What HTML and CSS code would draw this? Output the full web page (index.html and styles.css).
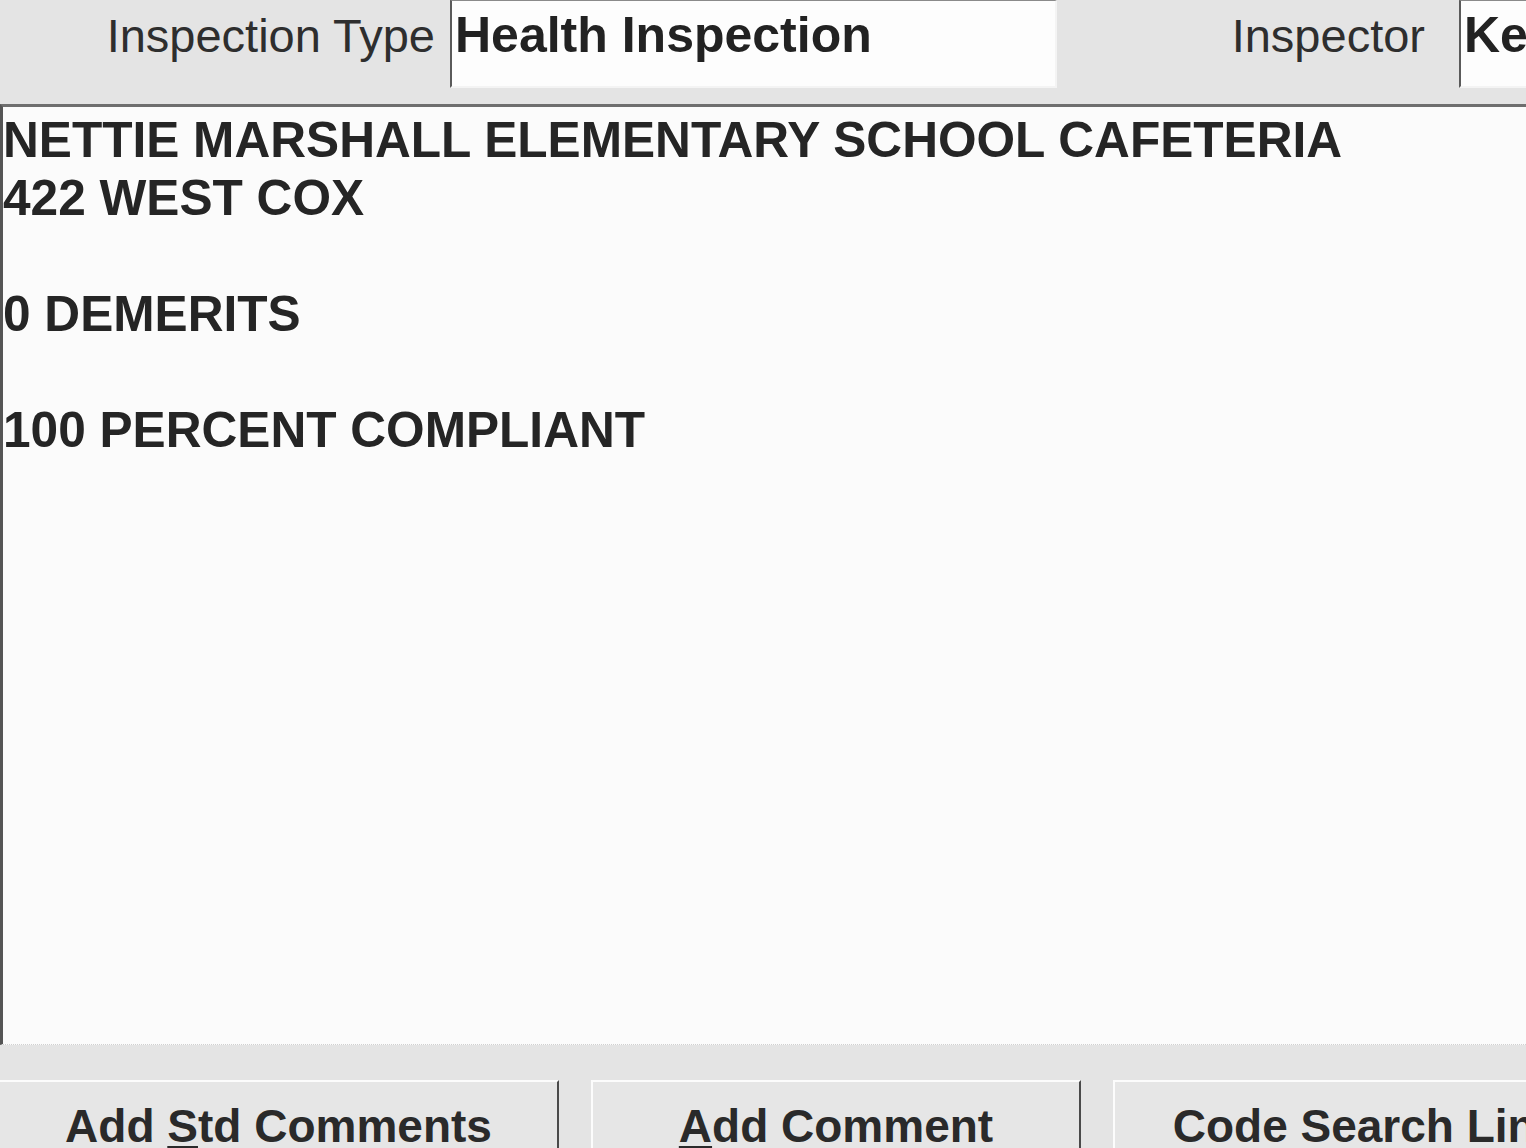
FILE: index.html
```html
<!DOCTYPE html>
<html>
<head>
<meta charset="utf-8">
<link rel="stylesheet" href="styles.css">
</head>
<body>
<div class="screen">
  <div class="topbar">
    <div class="label label-type">Inspection Type</div>
    <div class="field field-type">Health Inspection</div>
    <div class="label label-inspector">Inspector</div>
    <div class="field field-inspector">Ke</div>
  </div>
  <div class="comments">
    <div class="line">NETTIE MARSHALL ELEMENTARY SCHOOL CAFETERIA</div>
    <div class="line">422 WEST COX</div>
    <div class="line blank"></div>
    <div class="line">0 DEMERITS</div>
    <div class="line blank"></div>
    <div class="line">100 PERCENT COMPLIANT</div>
  </div>
  <div class="buttonbar">
    <div class="btn btn-first">Add <u>S</u>td Comments</div>
    <div class="btn"><u>A</u>dd Comment</div>
    <div class="btn btn-last">Code Search Link</div>
  </div>
</div>
</body>
</html>
```

FILE: styles.css
```css
html, body {
  margin: 0;
  padding: 0;
  background: #e4e4e4;
  overflow: hidden;
}
.screen {
  width: 1526px;
  height: 1148px;
  overflow: hidden;
  display: flex;
  flex-direction: column;
  font-family: "Liberation Sans", Arial, sans-serif;
  color: #262626;
  background: #e4e4e4;
}
.topbar {
  height: 104px;
  flex: none;
  display: flex;
  align-items: flex-start;
  overflow: hidden;
}
.label {
  flex: none;
  font-size: 47px;
  line-height: 60px;
  padding-top: 6px;
  text-align: right;
  box-sizing: border-box;
  color: #2e2e2e;
  white-space: nowrap;
}
.label-type {
  width: 450px;
  padding-right: 15px;
}
.label-inspector {
  width: 402px;
  padding-right: 34px;
}
.field {
  flex: none;
  height: 88px;
  box-sizing: border-box;
  background: #fdfdfd;
  border-top: 1px solid #8a8a8a;
  border-left: 2px solid #5a5a5a;
  border-bottom: 2px solid #f4f4f4;
  border-right: 2px solid #f4f4f4;
  font-size: 50px;
  font-weight: bold;
  line-height: 60px;
  padding-top: 4px;
  padding-left: 3px;
  white-space: nowrap;
  overflow: hidden;
  color: #222;
}
.field-type {
  width: 607px;
}
.field-inspector {
  width: 200px;
  padding-left: 3px;
}
.comments {
  height: 941px;
  flex: none;
  box-sizing: border-box;
  background: #fbfbfb;
  border-top: 3px solid #6e6e6e;
  border-left: 3px solid #555;
  border-bottom: 1px dotted #d0d0d0;
  padding-top: 4px;
  padding-left: 0;
  font-size: 49.6px;
  font-weight: bold;
  line-height: 58px;
  color: #252525;
}
.line {
  height: 58px;
  white-space: nowrap;
}
.buttonbar {
  flex: none;
  display: flex;
  gap: 32px;
  padding-top: 35px;
}
.btn {
  flex: none;
  width: 490px;
  height: 110px;
  box-sizing: border-box;
  background: #e6e6e6;
  border-top: 2px solid #fcfcfc;
  border-left: 2px solid #fcfcfc;
  border-right: 2px solid #4a4a4a;
  font-size: 46px;
  font-weight: bold;
  line-height: 52px;
  padding-top: 18px;
  text-align: center;
  white-space: nowrap;
  color: #2a2a2a;
}
.btn-first {
  width: 559px;
  border-left: none;
}
.btn-last {
  width: 490px;
  padding-left: 18px;
}
.btn u {
  text-decoration-thickness: 3px;
  text-underline-offset: 4px;
}
```
